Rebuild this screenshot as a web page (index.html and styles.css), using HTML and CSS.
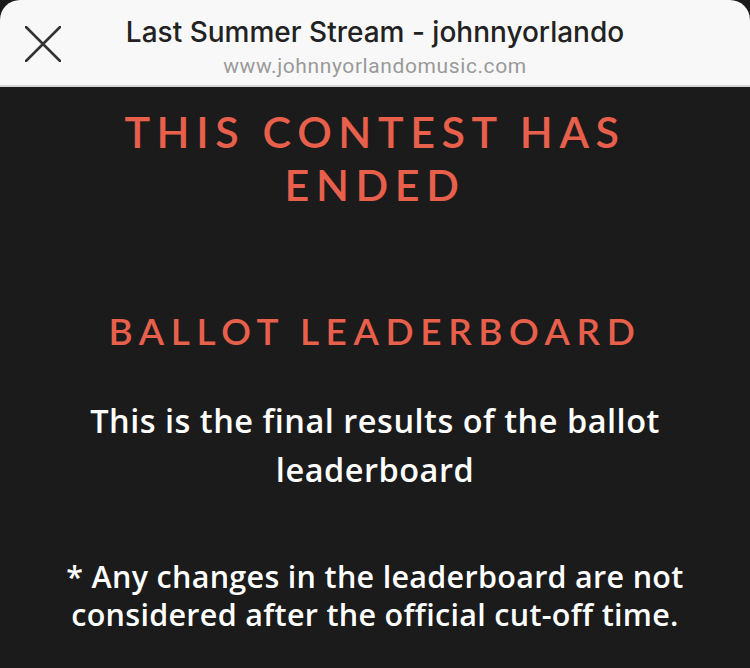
FILE: index.html
```html
<!DOCTYPE html>
<html lang="en">
<head>
<meta charset="utf-8">
<title>Last Summer Stream - johnnyorlando</title>
<link rel="stylesheet" href="styles.css">
</head>
<body>
  <header class="sheet-bar">
    <button class="close" aria-label="Close">
      <svg width="36" height="36" viewBox="0 0 36 36"><path d="M1 1 L35 35 M35 1 L1 35" stroke="#333" stroke-width="2.6" stroke-linecap="round" fill="none"/></svg>
    </button>
    <div class="titles">
      <div class="page-title">Last Summer Stream - johnnyorlando</div>
      <div class="page-url">www.johnnyorlandomusic.com</div>
    </div>
  </header>
  <main class="contest">
    <h1 class="headline">THIS CONTEST HAS ENDED</h1>
    <h2 class="subhead">BALLOT LEADERBOARD</h2>
    <p class="lead">This is the final results of the ballot leaderboard</p>
    <p class="note">* Any changes in the leaderboard are not considered after the official cut-off time.</p>
  </main>
</body>
</html>
```

FILE: styles.css
```css
html, body {
  margin: 0;
  padding: 0;
  background: #1b1b1b;
}

body {
  width: 750px;
  height: 668px;
  overflow: hidden;
}

.sheet-bar {
  position: relative;
  height: 85px;
  background: #f8f8f8;
  border-radius: 20px 20px 0 0;
  border-bottom: 2px solid #d6d6d6;
  display: flex;
  justify-content: center;
  align-items: flex-start;
}

.close {
  position: absolute;
  left: 25px;
  top: 26px;
  width: 36px;
  height: 36px;
  padding: 0;
  border: 0;
  background: none;
}

.close svg { display: block; }

.titles {
  text-align: center;
  padding-top: 13px;
}

.page-title {
  font-family: Inter, Roboto, sans-serif;
  font-weight: 500;
  font-size: 28px;
  line-height: 38px;
  color: #222;
}

.page-url {
  font-family: Roboto, Inter, sans-serif;
  font-size: 21px;
  line-height: 30px;
  letter-spacing: 0.6px;
  color: #9a9a9a;
}

.contest {
  text-align: center;
  font-family: Lato, "Open Sans", sans-serif;
  padding: 0 30px;
}

.headline {
  margin: 18px auto 0;
  width: 580px;
  font-size: 43px;
  line-height: 53px;
  font-weight: 600;
  letter-spacing: 6.6px;
  color: #e8604c;
}

.subhead {
  margin: 95px 0 0;
  font-size: 37px;
  line-height: 50px;
  font-weight: 600;
  letter-spacing: 6.6px;
  color: #e8604c;
}

.lead {
  margin: 40px auto 0;
  width: 640px;
  font-family: "Open Sans", Lato, sans-serif;
  font-size: 32.5px;
  line-height: 49px;
  font-weight: 600;
  letter-spacing: 0.5px;
  color: #fff;
}

.note {
  margin: 63px auto 0;
  width: 690px;
  font-family: "Open Sans", Lato, sans-serif;
  font-size: 30.5px;
  line-height: 38px;
  font-weight: 600;
  letter-spacing: 0.3px;
  color: #fff;
}
```
